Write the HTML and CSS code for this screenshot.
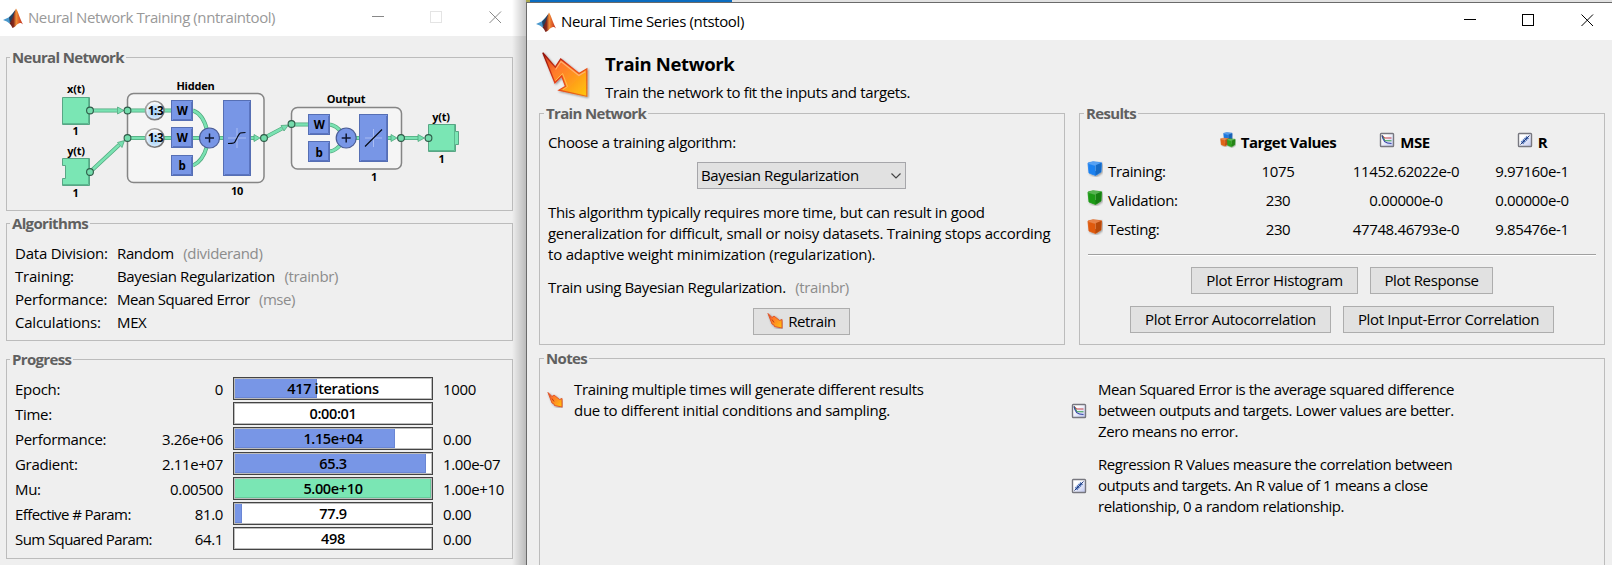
FILE: index.html
```html
<!DOCTYPE html>
<html lang="en">
<head>
<meta charset="utf-8">
<title>Neural Network Training</title>
<link rel="stylesheet" href="styles.css">
</head>
<body>
<svg class="defs" width="0" height="0">
  <defs>
    <linearGradient id="flame" x1="0" y1="0" x2="1" y2="1"><stop offset="0.1" stop-color="#e04820"/><stop offset="0.35" stop-color="#ff7a2c"/><stop offset="0.65" stop-color="#ff9a1c"/><stop offset="1" stop-color="#ffc80a"/></linearGradient>
    <linearGradient id="flameEdge" x1="0" y1="0" x2="1" y2="1"><stop offset="0" stop-color="#8e1008"/><stop offset="0.5" stop-color="#e8401a"/><stop offset="1" stop-color="#e87818"/></linearGradient>
    <linearGradient id="logoR" x1="0" y1="0" x2="1" y2="0"><stop offset="0" stop-color="#5a1a1c"/><stop offset="0.3" stop-color="#8a2a1c"/><stop offset="0.5" stop-color="#f09038"/><stop offset="0.7" stop-color="#e0602a"/><stop offset="1" stop-color="#b82a1c"/></linearGradient>
    <linearGradient id="paper" x1="0" y1="0" x2="1" y2="1"><stop offset="0.3" stop-color="#fff"/><stop offset="1" stop-color="#bcc4ee"/></linearGradient>
    <radialGradient id="ball" cx="0.5" cy="0.6" r="0.55"><stop offset="0" stop-color="#9ccff8"/><stop offset="0.6" stop-color="#cfe6fa"/><stop offset="1" stop-color="#fff"/></radialGradient>
    <linearGradient id="rim" x1="0" y1="0" x2="1" y2="1"><stop offset="0" stop-color="#b0b0b0"/><stop offset="1" stop-color="#666"/></linearGradient>
    <filter id="drop" x="-20%" y="-20%" width="150%" height="150%"><feDropShadow dx="1" dy="1" stdDeviation="0.8" flood-opacity="0.4"/></filter>
    <symbol id="logo" viewBox="0 0 20 20">
      <path d="M0 12 L5.500 9.500 L9 6 L11 4 L9.500 12 L6.500 15.500 L3.800 13.600Z" fill="#4a98cc"/>
      <path d="M6 9.500 L9 6.500 L12.500 1.500 L11 11 L7 15Z" fill="#24405e"/>
      <path d="M6.500 15.500 C9.500 12 11 5 13 0.500 C15 3 17 11 20 16.500 C17 13.500 15.500 15.500 13.500 17 C12 19 11 19.500 9.500 20 C8.500 18 7.500 16 6.500 15.500Z" fill="url(#logoR)"/>
    </symbol>
    <symbol id="arrow" viewBox="0 0 48 48">
      <path d="M0.800 0.800 L13.300 15.200 L18.700 7 L37 21.500 L44.800 17 L44.800 44.300 L17 38.200 L23.500 34.200 L19.700 24 L12.900 30.800Z" fill="url(#flame)" stroke="url(#flameEdge)" stroke-width="1.300" filter="url(#drop)"/>
      <path d="M13.600 17.500 L19 9.500 L36.800 23.500 L43.300 19.700" fill="none" stroke="#ffb070" stroke-width="1.100"/>
      <path d="M21 37.600 L25.500 34.600 L20.600 21.500 L13.500 28.500" fill="none" stroke="#ffb850" stroke-width="1"/>
    </symbol>
    <symbol id="arrowSmall" viewBox="0 0 16 16">
      <path d="M1 0.500 L5 4.500 L7 3 L12.500 7.500 L15 6.500 L15 15 L7.500 13.500 L7 12 L5 11Z" fill="url(#flame)" stroke="#e0582a" stroke-width="1" filter="url(#drop)"/>
      <path d="M5 6.500 L7 9.500" stroke="#c03a12" stroke-width="1"/>
    </symbol>
    <symbol id="mse" viewBox="0 0 16 16">
      <rect x="1.500" y="1.500" width="13" height="13" rx="0.800" fill="url(#paper)" stroke="#77777f" stroke-width="1.400"/>
      <path d="M3 3.500 L5.500 6 H12.500" fill="none" stroke="#c84048" stroke-width="1.100"/>
      <path d="M3 3.500 L6 8.700 H12.500" fill="none" stroke="#38a050" stroke-width="1.100"/>
      <path d="M3 3.500 C4 9 6 11.500 12.500 11.500" fill="none" stroke="#3440a8" stroke-width="1.100"/>
    </symbol>
    <symbol id="reg" viewBox="0 0 16 16">
      <rect x="1.500" y="1.500" width="13" height="13" rx="0.800" fill="url(#paper)" stroke="#77777f" stroke-width="1.400"/>
      <path d="M5 11 L11 5" stroke="#4a70b8" stroke-width="3.400" stroke-dasharray="1.600 0.600"/>
      <path d="M3.500 12.500 L12.500 3.500" stroke="#223a78" stroke-width="1"/>
    </symbol>
    <symbol id="cube" viewBox="0 0 16 16">
      <path d="M1 2 L6 0.800 L14.500 1.800 L14 11 L8.500 14.500 L2 12Z" fill="currentColor" stroke="currentColor" stroke-width="0.800" stroke-linejoin="round" filter="url(#drop)"/>
      <path d="M1 2 L6 0.800 L14.500 1.800 L8.500 4.200Z" fill="#fff" opacity="0.250"/>
      <path d="M8.500 4.200 L14.500 1.800 L14 11 L8.500 14.500Z" fill="#000" opacity="0.180"/>
      <path d="M1.500 2.500 L8.500 4.500 L8.500 10" fill="none" stroke="#fff" stroke-width="0.600" opacity="0.350"/>
    </symbol>
    <symbol id="cubes" viewBox="0 0 16 16">
      <g color="#1f78e0"><use href="#cube" x="3" y="0" width="10" height="10"/></g>
      <g color="#e06414"><use href="#cube" x="0" y="5.500" width="9.500" height="9.500"/></g>
      <g color="#2da01e"><use href="#cube" x="6.500" y="6" width="9.500" height="10"/></g>
    </symbol>
  </defs>
</svg>

<div class="desktop">
  <div class="strip"><span class="strip-olive"></span><span class="strip-blue"></span></div>

  <section class="window training">
    <header class="titlebar inactive">
      <svg class="logo" width="20" height="20"><use href="#logo"/></svg>
      <span class="title">Neural Network Training (nntraintool)</span>
      <svg class="controls" width="130" height="13" viewBox="0 0 130 13" fill="none">
        <path d="M0 5.500H12" stroke="#888"/><rect x="58.500" y="0.500" width="11" height="11" stroke="#e4e4e4"/><path d="M117.500 0.500L129 12M129 0.500L117.500 12" stroke="#888"/>
      </svg>
    </header>
    <fieldset class="group network">
      <legend>Neural Network</legend>
      <svg class="diagram" width="505" height="143" viewBox="7 67 505 143">
        <g class="frames"><rect x="127.500" y="93.500" width="136.500" height="89" rx="6"/><rect x="291.500" y="107.500" width="110" height="61.500" rx="6"/></g>
        <g class="wire-edge"><path d="M90 110.500H117M90 172L119 145M127 110.500H172M127 138H230M193 110.500Q203 114 207 130M193 165.500Q203 161 207 146M251 138H256M264 138L282 128.500M291 124.500H309M330 124.500Q337 126 341 132M330 151.500Q337 150 341 144M350 138H360M388 138H393M401 138H420"/></g>
        <g class="wire"><path d="M90 110.500H117M90 172L119 145M127 110.500H172M127 138H230M193 110.500Q203 114 207 130M193 165.500Q203 161 207 146M251 138H256M264 138L282 128.500M291 124.500H309M330 124.500Q337 126 341 132M330 151.500Q337 150 341 144M350 138H360M388 138H393M401 138H420"/></g>
        <g class="heads"><path d="M117.500 107L124 110.500L117.500 114Z"/><path d="M117.500 142.500L124.500 140.500L122 147.500Z"/><path d="M254 134.500L260 138L254 141.500Z"/><path d="M281 125.500L288.500 125L284 131Z"/><path d="M391 134.500L397 138L391 141.500Z"/><path d="M418 134.500L424.500 138L418 141.500Z"/></g>
        <g class="green-box"><path d="M62.500 97.500H89.500V124.500H62.500Z"/><path d="M62.500 158.500H89.500V185.500H62.500V178.500H65.500V165.500H62.500Z"/><path d="M428.500 124.500H455.500V131.500H458.500V144.500H455.500V151.500H428.500Z"/></g>
        <g class="green-lo"><path d="M63 123.500H88.500V98M63 184.500H88.500V159M429 150.500H454.500V125"/></g>
        <g class="blue-box"><rect x="171.500" y="100.500" width="21" height="20"/><rect x="171.500" y="127.500" width="21" height="20"/><rect x="171.500" y="155.500" width="21" height="20"/><rect x="223.500" y="100.500" width="27" height="75"/><rect x="308.500" y="114.500" width="21" height="20"/><rect x="308.500" y="141.500" width="21" height="20"/><rect x="359.500" y="114.500" width="28" height="47"/></g>
        <g class="blue-lo"><path d="M173 119.500H191.500V102M173 146.500H191.500V129M173 174.500H191.500V157M225 174.500H249.500V102M310 133.500H328.500V116M310 160.500H328.500V143M361 160.500H386.500V116"/></g>
        <g class="sum"><circle cx="209.500" cy="138" r="10"/><circle cx="346.200" cy="138" r="10"/></g>
        <path class="plus" d="M205 138H214M209.500 133.500V142.500M341.700 138H350.700M346.200 133.500V142.500"/>
        <path class="axes" d="M228 138H246M237 128V148M365 138H382M373.500 129V147"/>
        <path class="curve" d="M228 143.500C236 143.500 234 143 237 138C240 132.500 239 132.500 245.500 132.500M365 146.500L382 129.500"/>
        <g class="delay"><circle cx="154.700" cy="110.500" r="9.300"/><circle cx="154.700" cy="138" r="9.300"/></g>
        <g class="port"><circle cx="90" cy="110.500" r="3.400"/><circle cx="90" cy="172" r="3.400"/><circle cx="127.500" cy="110.500" r="3.400"/><circle cx="127.500" cy="138" r="3.400"/><circle cx="264" cy="138" r="3.400"/><circle cx="291.500" cy="124" r="3.400"/><circle cx="401" cy="138" r="3.400"/><circle cx="428.500" cy="138" r="3.400"/></g>
        <g class="labels">
          <text x="76" y="93">x(t)</text><text x="75.500" y="135">1</text><text x="76" y="155">y(t)</text><text x="75.500" y="196.500">1</text>
          <text x="195.500" y="89.500">Hidden</text><text x="237" y="194.500">10</text><text x="346" y="103">Output</text><text x="374" y="180.500">1</text>
          <text x="441" y="121">y(t)</text><text x="441.500" y="162.500">1</text>
          <text x="155.500" y="114.800" class="mid">1:3</text><text x="155.500" y="142.300" class="mid">1:3</text>
          <text x="182" y="115" class="mid">W</text><text x="182" y="142" class="mid">W</text><text x="182" y="170" class="mid">b</text>
          <text x="319" y="129" class="mid">W</text><text x="319" y="156.500" class="mid">b</text>
        </g>
      </svg>
    </fieldset>
    <fieldset class="group algorithms">
      <legend>Algorithms</legend>
      <dl>
        <dt>Data Division:</dt><dd>Random <i>(dividerand)</i></dd>
        <dt>Training:</dt><dd>Bayesian Regularization <i>(trainbr)</i></dd>
        <dt>Performance:</dt><dd class="tight">Mean Squared Error <i>(mse)</i></dd>
        <dt>Calculations:</dt><dd>MEX</dd>
      </dl>
    </fieldset>
    <fieldset class="group progress">
      <legend>Progress</legend>
      <div class="row"><span class="name">Epoch:</span><span class="from">0</span><div class="bar"><div class="fill" style="width:41.7%"></div><b>417 iterations</b></div><span class="to">1000</span></div>
      <div class="row"><span class="name">Time:</span><span class="from"></span><div class="bar"><b>0:00:01</b></div><span class="to"></span></div>
      <div class="row"><span class="name">Performance:</span><span class="from">3.26e+06</span><div class="bar"><div class="fill" style="width:81.5%"></div><b>1.15e+04</b></div><span class="to">0.00</span></div>
      <div class="row"><span class="name">Gradient:</span><span class="from">2.11e+07</span><div class="bar"><div class="fill" style="width:97.2%"></div><b>65.3</b></div><span class="to">1.00e-07</span></div>
      <div class="row"><span class="name">Mu:</span><span class="from">0.00500</span><div class="bar"><div class="fill done" style="width:100%"></div><b>5.00e+10</b></div><span class="to">1.00e+10</span></div>
      <div class="row"><span class="name tight">Effective # Param:</span><span class="from">81.0</span><div class="bar"><div class="fill" style="width:3.8%"></div><b>77.9</b></div><span class="to">0.00</span></div>
      <div class="row"><span class="name tight">Sum Squared Param:</span><span class="from">64.1</span><div class="bar"><b>498</b></div><span class="to">0.00</span></div>
    </fieldset>
  </section>

  <section class="window series">
    <header class="titlebar">
      <svg class="logo" width="20" height="20"><use href="#logo"/></svg>
      <span class="title">Neural Time Series (ntstool)</span>
      <svg class="controls" width="130" height="13" viewBox="0 0 130 13" fill="none">
        <path d="M0 5.500H12" stroke="#000"/><rect x="58.500" y="0.500" width="11" height="11" stroke="#000"/><path d="M117.500 0.500L129 12M129 0.500L117.500 12" stroke="#000"/>
      </svg>
    </header>
    <div class="intro">
      <svg width="48" height="48"><use href="#arrow"/></svg>
      <div><h1>Train Network</h1><p>Train the network to fit the inputs and targets.</p></div>
    </div>
    <div class="columns">
      <fieldset class="group train">
        <legend>Train Network</legend>
        <p class="choose">Choose a training algorithm:</p>
        <div class="select"><span>Bayesian Regularization</span><svg width="10" height="6" viewBox="0 0 10 6"><path d="M0.500 0.500L5 5L9.500 0.500" fill="none" stroke="#444" stroke-width="1.200"/></svg></div>
        <p class="about">This algorithm typically requires more time, but can result in good<br><span class="wide">generalization for difficult, small or noisy datasets. Training stops according</span><br><span class="wide">to adaptive weight minimization (regularization).</span></p>
        <p class="using">Train using Bayesian Regularization. <i>(trainbr)</i></p>
        <button class="retrain"><svg width="16" height="16"><use href="#arrowSmall"/></svg><span>Retrain</span></button>
      </fieldset>
      <fieldset class="group results">
        <legend>Results</legend>
        <div class="table">
          <span></span><b><svg width="16" height="16"><use href="#cubes"/></svg>Target Values</b><b class="mse-head"><svg width="16" height="16"><use href="#mse"/></svg>MSE</b><b class="r-head"><svg width="16" height="16"><use href="#reg"/></svg>R</b>
          <span class="set blue"><svg width="16" height="16"><use href="#cube"/></svg>Training:</span><span>1075</span><span>11452.62022e-0</span><span>9.97160e-1</span>
          <span class="set green"><svg width="16" height="16"><use href="#cube"/></svg>Validation:</span><span>230</span><span>0.00000e-0</span><span>0.00000e-0</span>
          <span class="set orange"><svg width="16" height="16"><use href="#cube"/></svg>Testing:</span><span>230</span><span>47748.46793e-0</span><span>9.85476e-1</span>
        </div>
        <hr>
        <div class="buttons"><button class="w167">Plot Error Histogram</button><button class="w123">Plot Response</button></div>
        <div class="buttons"><button class="w201">Plot Error Autocorrelation</button><button class="w211">Plot Input-Error Correlation</button></div>
      </fieldset>
    </div>
    <fieldset class="group notes">
      <legend>Notes</legend>
      <div class="note-cols">
        <div class="note"><svg width="16" height="16"><use href="#arrowSmall"/></svg><p>Training multiple times will generate different results<br><span class="wide">due to different initial conditions and sampling.</span></p></div>
        <div class="note-stack">
          <div class="note"><svg width="16" height="16"><use href="#mse"/></svg><p>Mean Squared Error is the average squared difference<br>between outputs and targets. Lower values are better.<br>Zero means no error.</p></div>
          <div class="note"><svg width="16" height="16"><use href="#reg"/></svg><p>Regression R Values measure the correlation between<br>outputs and targets. An R value of 1 means a close<br>relationship, 0 a random relationship.</p></div>
        </div>
      </div>
    </fieldset>
  </section>
</div>
</body>
</html>
```
FILE: styles.css
```css
* { box-sizing: border-box; }
body { margin: 0; font: 15px/21px "Open Sans", "Noto Sans", sans-serif; letter-spacing: -0.36px; color: #000; }
p, h1, dl, dd { margin: 0; }
i { font-style: normal; color: #8c8c8c; margin-left: 6px; }
.defs { position: absolute; }
.desktop { position: relative; width: 1612px; height: 565px; overflow: hidden; background: #efefef; }

.strip { position: absolute; left: 524px; top: 0; right: 0; height: 2px; display: flex; background: #e2e2e2; }
.strip-olive { width: 6px; background: #a9a850; }
.strip-blue { width: 202px; background: #0a6cc0; }

.window { position: absolute; background: #efefef; }
.training { left: 0; top: 0; width: 526px; height: 565px; padding: 0 13px 0 6px; }
.training::after { content: ""; position: absolute; top: 0; right: 0; width: 14px; height: 100%; background: linear-gradient(90deg, transparent, rgba(0,0,0,.22)); }
.series { left: 526px; top: 2px; width: 1087px; height: 564px; border: 1px solid #6a6a6a; padding-left: 12px; padding-right: 7px; }

.titlebar { display: flex; align-items: center; background: #fff; }
.training .titlebar { height: 36px; margin: 0 -13px 0 -6px; padding: 0 24px 0 3px; }
.series .titlebar { height: 37px; margin: 0 -7px 0 -12px; padding: 0 18px 0 9px; }
.title { margin-left: 5px; flex: 1; }
.controls { margin-top: -2px; }
.inactive .title { color: #999; letter-spacing: -0.42px; margin-top: -2px; }

.group { border: 1px solid #bcbcbc; margin: 0; padding: 0; min-width: 0; }
legend { height: 20px; line-height: 18px; padding: 1px 2px 0; margin-left: 3px; font-weight: 700; color: #606060; letter-spacing: -0.66px; }
.train legend, .results legend, .notes legend { margin-left: 4px; }
.network { height: 164px; margin-top: 11px; }
.algorithms { height: 128px; margin-top: 2px; }
.progress { height: 210px; margin-top: 8px; }

.diagram { display: block; }
.frames rect { fill: #f5f5f5; stroke: #858585; stroke-width: 1.5; }
.wire-edge { fill: none; stroke: #4fa77c; stroke-width: 4; }
.wire { fill: none; stroke: #7ae2b2; stroke-width: 2.6; }
.heads { fill: #76e0b0; stroke: #4fa77c; stroke-width: 0.8; }
.green-box { fill: #7ae6b4; stroke: #58a685; }
.green-lo { fill: none; stroke: #5cb890; }
.blue-box { fill: #7896e6; stroke: #566fb4; }
.blue-lo { fill: none; stroke: #5a74c0; }
.sum { fill: #7896e6; stroke: #4a5c96; stroke-width: 1.2; }
.plus { stroke: #101830; stroke-width: 1.5; }
.axes { stroke: #a8bcf4; stroke-width: 1; }
.curve { fill: none; stroke: #080c18; stroke-width: 1.2; }
.delay { fill: url(#ball); stroke: url(#rim); stroke-width: 1.6; }
.port { fill: #74dcac; stroke: #2f5a48; stroke-width: 1.1; }
.labels { font: 700 11px "Open Sans", sans-serif; letter-spacing: -0.2px; text-anchor: middle; }
.labels .mid { font-size: 11.5px; letter-spacing: -0.4px; }

.algorithms dl { display: grid; grid-template-columns: 103px 1fr; grid-auto-rows: 23px; line-height: 23px; padding: 9px 0 0 7px; }
.algorithms dt { padding-left: 1px; letter-spacing: -0.22px; }
.algorithms .tight { letter-spacing: -0.5px; }

.row { display: grid; grid-template-columns: 140px 68px 210px 70px; height: 25px; line-height: 25px; padding-left: 8px; white-space: nowrap; }
.row:first-of-type { margin-top: 8px; }
.from { text-align: right; }
.name { letter-spacing: -0.3px; }
.name.tight { letter-spacing: -0.58px; }
.to { padding-left: 10px; }
.bar { position: relative; height: 23px; margin-left: 10px; border: 1px solid #444; background: #fff; box-shadow: inset 0 0 0 1px #bdbdbd; padding: 1px; }
.fill { height: 100%; background: #7896e6; box-shadow: inset -1px -1px 0 #6a86d4; }
.fill.done { background: #7ae6b4; box-shadow: inset -1px -1px 0 #66cc9c; }
.bar b { position: absolute; inset: 0; text-align: center; line-height: 21px; font-weight: 600; font-size: 14.5px; }

.intro { display: flex; height: 63px; padding: 12px 0 0 3px; }
.intro div { margin-left: 15px; }
.intro h1 { font-size: 18.5px; line-height: 24px; }
.intro p { line-height: 21px; margin-top: 6px; }
.columns { display: flex; gap: 14px; }
.columns .group { height: 242px; width: 526px; }

.train p { padding-left: 8px; }
.choose { margin-top: 9px; }
.select { width: 209px; height: 27px; margin: 9px 0 0 157px; border: 1px solid #a6a6aa; background: #e1e1e1; display: flex; align-items: center; justify-content: space-between; padding: 0 4px 0 3px; }
.about { margin-top: 13px; letter-spacing: -0.34px; }
.wide { letter-spacing: -0.29px; }
.about .wide + br + .wide { letter-spacing: -0.2px; }
.using { margin-top: 12px; letter-spacing: -0.37px; }
button { font: inherit; letter-spacing: inherit; color: #000; height: 27px; border: 1px solid #adadad; background: #e1e1e1; padding: 0; }
.retrain { display: flex; align-items: center; justify-content: center; gap: 5px; width: 97px; margin: 10px 0 0 213px; letter-spacing: -0.4px; }
.retrain svg { margin-top: -2px; }

.table { display: grid; grid-template-columns: 126px 130px 126px 126px; grid-auto-rows: 29px; line-height: 29px; padding: 5px 0 0 7px; text-align: center; }
.table b { display: flex; justify-content: center; gap: 5px; letter-spacing: -0.5px; }
.table .mse-head { padding-right: 3px; }
.table b svg { margin-top: 4px; }
.set { display: flex; gap: 5px; text-align: left; }
.set svg { margin-top: 4px; }
.blue svg { color: #1e82f0; }
.green svg { color: #1c9a14; }
.orange svg { color: #e05a10; }
hr { margin: 10px 8px 11px; border: 0; height: 2px; background: #fff; border-top: 1px solid #a0a0a0; }
.buttons { display: flex; justify-content: center; gap: 12px; margin-bottom: 12px; }
.w167 { width: 167px; } .w123 { width: 123px; } .w201 { width: 201px; } .w211 { width: 211px; }

.notes { height: 230px; margin-top: 3px; width: 1066px; }
.note-cols { display: grid; grid-template-columns: 524px 1fr; align-items: start; padding: 11px 0 0 7px; }
.note { display: flex; align-items: center; gap: 11px; }
.note-stack { display: grid; gap: 12px; letter-spacing: -0.44px; }
```
